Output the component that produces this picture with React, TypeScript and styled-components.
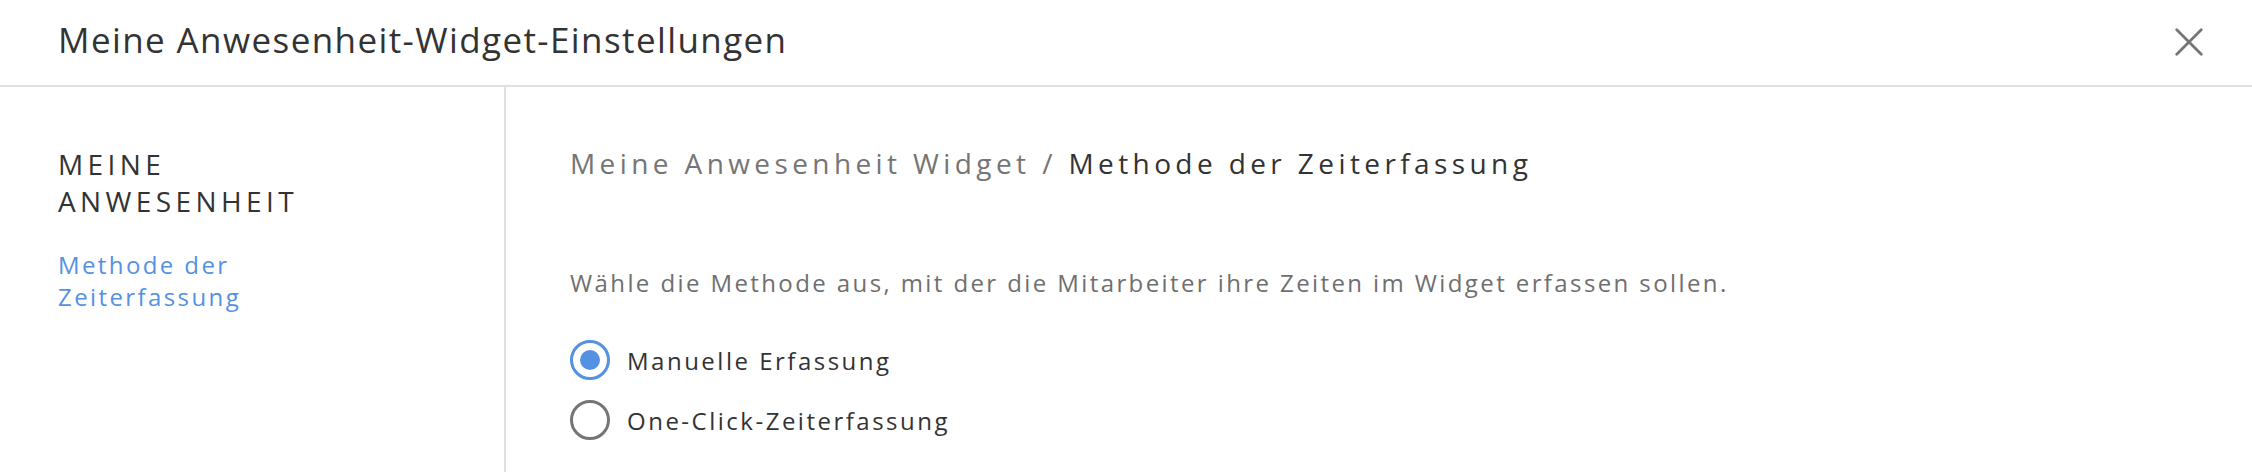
import * as React from 'react';
import styled, { createGlobalStyle } from 'styled-components';

const GlobalStyle = createGlobalStyle`
  html, body {
    margin: 0;
    padding: 0;
    background: #ffffff;
  }

  body {
    font-family: 'Open Sans', 'Noto Sans', sans-serif;
    color: #333333;
  }
`;

const StyledDialog = styled.div`
  display: flex;
  flex-direction: column;
  width: 2252px;
  height: 472px;
  overflow: hidden;
  background: #ffffff;
`;

const StyledHeader = styled.header`
  display: flex;
  align-items: center;
  justify-content: space-between;
  height: 79px;
  padding: 0 48px 6px 58px;
  border-bottom: 2px solid #e0e0e0;
  flex-shrink: 0;
`;

const StyledTitle = styled.h1`
  margin: 0;
  font-size: 35px;
  font-weight: 400;
  letter-spacing: 1.4px;
  color: #333333;
`;

const StyledClose = styled.button`
  display: flex;
  align-items: center;
  justify-content: center;
  width: 30px;
  height: 30px;
  margin-top: 4px;
  padding: 0;
  border: none;
  background: none;
  color: #757575;
  cursor: pointer;

  & > svg {
    width: 28px;
    height: 28px;
  }
`;

const StyledBody = styled.div`
  display: flex;
  flex: 1;
`;

const StyledSidebar = styled.nav`
  width: 446px;
  padding: 59px 0 0 58px;
  border-right: 2px solid #e0e0e0;
  flex-shrink: 0;
`;

const StyledSection = styled.div`
  font-size: 28px;
  line-height: 37px;
  letter-spacing: 4.4px;
  text-transform: uppercase;
  color: #333333;
  width: 300px;
`;

const StyledNavLink = styled.a`
  display: block;
  margin-top: 29px;
  font-size: 24px;
  line-height: 32px;
  letter-spacing: 2.4px;
  color: #5591e2;
  text-decoration: none;
  width: 240px;
`;

const StyledContent = styled.main`
  flex: 1;
  padding: 56px 0 0 64px;
`;

const StyledBreadcrumb = styled.h2`
  margin: 0;
  font-size: 28px;
  font-weight: 400;
  line-height: 40px;
  letter-spacing: 4.4px;
  color: #757575;
`;

const StyledCurrent = styled.span`
  color: #333333;
`;

const StyledDescription = styled.p`
  margin: 85px 0 0;
  font-size: 24px;
  line-height: 30px;
  letter-spacing: 2.4px;
  color: #6f6f6f;
`;

const StyledOptions = styled.div`
  display: flex;
  flex-direction: column;
  gap: 20px;
  margin-top: 42px;
`;

const StyledOption = styled.label`
  display: flex;
  align-items: center;
  gap: 17px;
  height: 40px;
  font-size: 24px;
  letter-spacing: 2.5px;
  color: #333333;
  cursor: pointer;
`;

const StyledRadio = styled.span<{ $checked: boolean }>`
  position: relative;
  width: 40px;
  height: 40px;
  box-sizing: border-box;
  border-radius: 50%;
  border: 3px solid ${({ $checked }) => ($checked ? '#5591e2' : '#757575')};
  flex-shrink: 0;

  &::after {
    content: '';
    position: absolute;
    inset: 7px;
    border-radius: 50%;
    background: #5591e2;
    display: ${({ $checked }) => ($checked ? 'block' : 'none')};
  }
`;

const options = [
  { id: 'manual', label: 'Manuelle Erfassung' },
  { id: 'oneclick', label: 'One-Click-Zeiterfassung' },
];

export default function App() {
  const [method, setMethod] = React.useState('manual');

  return (
    <>
      <GlobalStyle />
      <StyledDialog>
        <StyledHeader>
          <StyledTitle>Meine Anwesenheit-Widget-Einstellungen</StyledTitle>
          <StyledClose aria-label="Schließen">
            <svg viewBox="0 0 24 24" fill="none" stroke="currentColor" strokeWidth="2.4" strokeLinecap="round">
              <path d="M1.5 1.5l21 21M22.5 1.5l-21 21" />
            </svg>
          </StyledClose>
        </StyledHeader>
        <StyledBody>
          <StyledSidebar>
            <StyledSection>Meine Anwesenheit</StyledSection>
            <StyledNavLink href="#">Methode der Zeiterfassung</StyledNavLink>
          </StyledSidebar>
          <StyledContent>
            <StyledBreadcrumb>
              Meine Anwesenheit Widget / <StyledCurrent>Methode der Zeiterfassung</StyledCurrent>
            </StyledBreadcrumb>
            <StyledDescription>
              Wähle die Methode aus, mit der die Mitarbeiter ihre Zeiten im Widget erfassen sollen.
            </StyledDescription>
            <StyledOptions>
              {options.map((o) => (
                <StyledOption key={o.id} onClick={() => setMethod(o.id)}>
                  <StyledRadio $checked={method === o.id} />
                  {o.label}
                </StyledOption>
              ))}
            </StyledOptions>
          </StyledContent>
        </StyledBody>
      </StyledDialog>
    </>
  );
}
